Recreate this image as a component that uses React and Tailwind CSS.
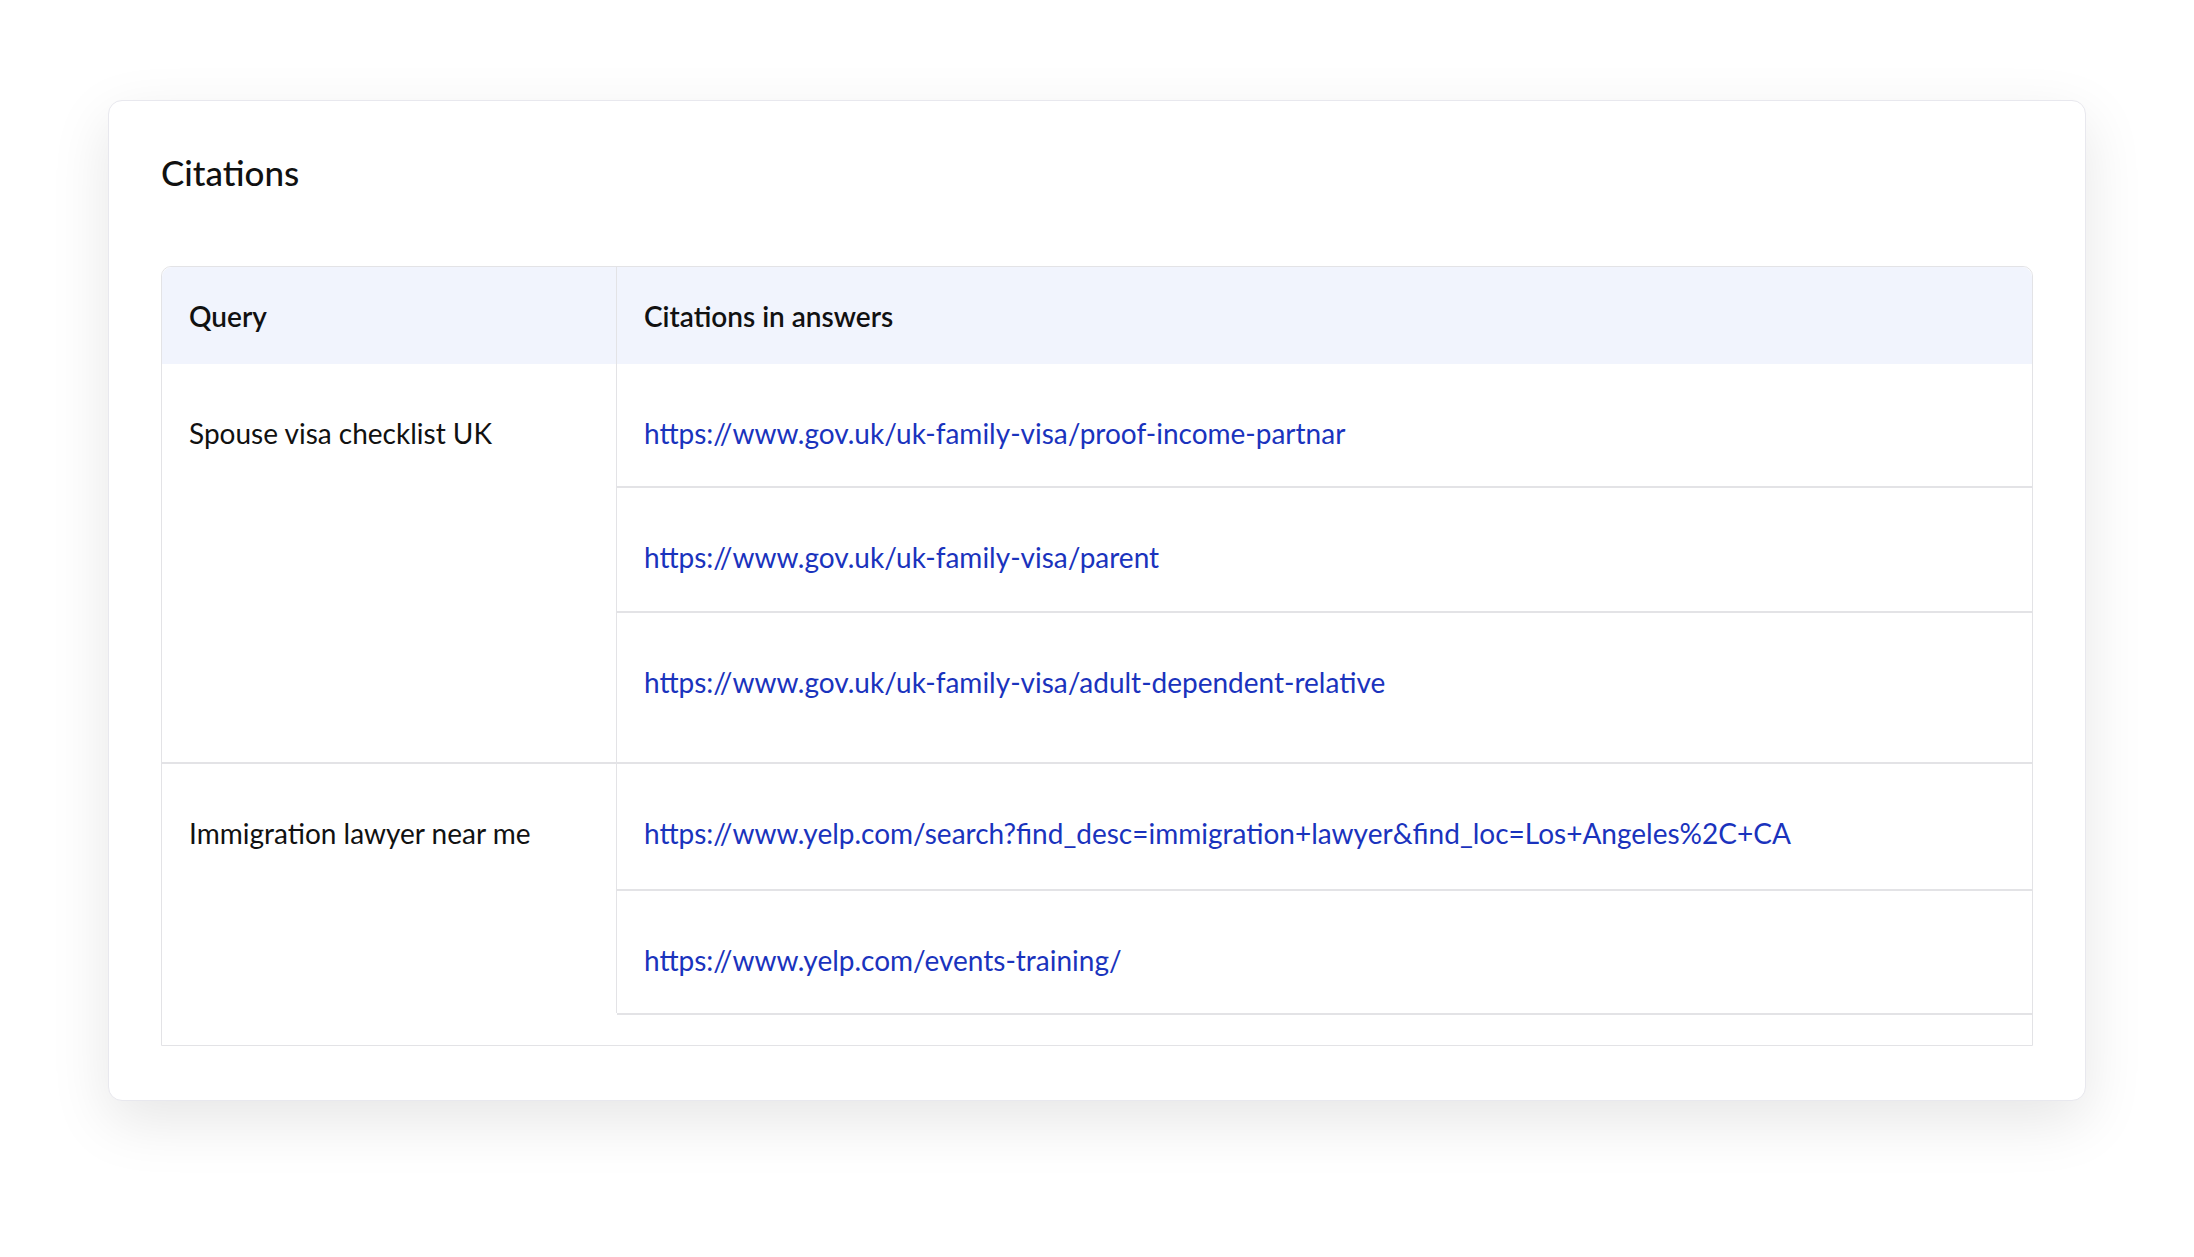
export default function App() {
  const font = { fontFamily: "Lato, 'Noto Sans', sans-serif" };
  const groups = [
    { q: "Spouse visa checklist UK", links: [
      ["https://www.gov.uk/uk-family-visa/proof-income-partnar", "h-[122px]"],
      ["https://www.gov.uk/uk-family-visa/parent", "h-[125px]"],
      ["https://www.gov.uk/uk-family-visa/adult-dependent-relative", "h-[151px]"],
    ]},
    { q: "Immigration lawyer near me", links: [
      ["https://www.yelp.com/search?find_desc=immigration+lawyer&find_loc=Los+Angeles%2C+CA", "h-[125px]"],
      ["https://www.yelp.com/events-training/", "h-[124px]"],
    ]},
  ];
  return (
    <div className="w-[2194px] h-[1257px] bg-white pt-[100px] pl-[108px]" style={font}>
      <div className="w-[1978px] h-[1001px] bg-white rounded-[14px] border border-[#e8e8ee] shadow-[0_20px_60px_rgba(0,0,0,0.10)] px-[52px]">
        <div className="h-[165px] flex items-center pb-[22px] text-[35px] text-[#111] font-medium">Citations</div>
        <div className="w-[1872px] border border-[#e3e3e6] rounded-t-[10px] text-[28px]">
          <div className="flex h-[97px] bg-[#f1f4fd] rounded-t-[10px] font-semibold text-[#111]">
            <div className="w-[455px] border-r border-[#e3e3e6] flex items-center pl-[27px]">Query</div>
            <div className="flex-1 flex items-center pl-[27px]">Citations in answers</div>
          </div>
          {groups.map((g, gi) => (
            <div key={gi} className={`flex ${gi > 0 ? "border-t-2 border-[#e3e3e6]" : ""}`}>
              <div className="w-[455px] border-r border-[#e3e3e6] pl-[27px] pt-[48px] text-[#111]">{g.q}</div>
              <div className="flex-1">
                {g.links.map(([l, h], i) => (
                  <div key={i} className={`${h} flex items-start pt-[48px] pl-[27px] text-[#1a33bd] ${i > 0 ? "border-t-2 border-[#e3e3e6]" : ""}`}>{l}</div>
                ))}
              </div>
            </div>
          ))}
          <div className="h-[32px] border-t-2 border-[#e3e3e6] ml-[455px]"></div>
        </div>
      </div>
    </div>
  );
}
